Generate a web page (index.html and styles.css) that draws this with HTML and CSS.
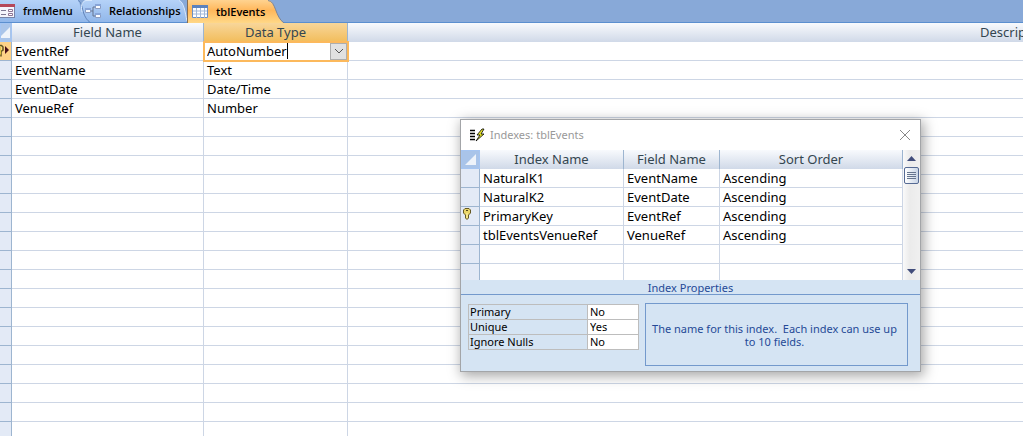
FILE: index.html
```
<!DOCTYPE html>
<html lang="en">
<head>
<meta charset="utf-8">
<title>tblEvents</title>
<link rel="stylesheet" href="styles.css">
<script src="rows.js" defer></script>
</head>
<body>
<nav class="tabs">
  <button class="tab tab-first">
    <svg class="tab-icon" width="16" height="14" viewBox="0 0 16 14"><rect x=".5" y=".5" width="15" height="13" fill="#f4f4fc" stroke="#7784a8"/><path d="M0 0h16v3H0z" fill="#b5485a"/><path d="M2 6.500h5M2 10.500h5" stroke="#7d7894"/><path d="M9.500 5.500h4v2h-4zM9.500 9.500h4v2h-4z" fill="#fff" stroke="#8e7494"/></svg>
    <span>frmMenu</span>
  </button>
  <button class="tab tab-second">
    <svg class="tab-edge" width="14" height="23" viewBox="0 0 14 23"><path d="M0 0h7C3 3 3 10 4 14C2 8 2 1 0 0z" fill="#88a9d8"/><path d="M0 .5C4 2 4 9 6 14C8 19 10 21 13 23" fill="none" stroke="#5f82b8"/><path d="M4 12C3 7 3 2 8 .5h6" fill="none" stroke="#d8e8fc"/></svg>
    <svg class="tab-icon" width="16" height="15" viewBox="0 0 16 15"><path d="M5 7h3V3h3M8 7v5h3" fill="none" stroke="#66758f"/><g stroke="#8c9cc0" fill="#f8fbff"><path d="M.5 4.500h5v4h-5zM10.500.5h5v4h-5zM10.500 9.500h5v4h-5z"/></g><path d="M0 4h6v2H0zM10 0h6v2h-6zM10 9h6v2h-6z" fill="#88a5d8"/></svg>
    <span>Relationships</span>
    <svg class="tab-corner" width="8" height="22" viewBox="0 0 8 22"><path d="M0 0h8v22C6 12 5 2 0 0z" fill="#88a9d8"/><path d="M0 .5C5 2 6 12 8 21" fill="none" stroke="#d8e8fc"/></svg>
  </button>
  <button class="tab tab-active">
    <svg class="tab-icon" width="16" height="13" viewBox="0 0 16 13"><path d="M.5.5h15v12H.5z" fill="#fff" stroke="#6b8fc4"/><path d="M0 0h16v3H0z" fill="#5c82bd"/><path d="M1 6h14M1 9h14" stroke="#a1b7d8"/><path d="M4.500 3v10M8.500 3v10M12.500 3v10" stroke="#a1b7d8"/></svg>
    <span>tblEvents</span>
    <svg class="tab-tail" width="17" height="23" viewBox="0 0 17 23"><defs><linearGradient id="tail" x2="0" y2="1"><stop offset="0" stop-color="#ffd390"/><stop offset=".45" stop-color="#ffb75b"/><stop offset="1" stop-color="#ffd887"/></linearGradient></defs><path d="M0 0C8 1 7 17 16 23H0z" fill="url(#tail)"/><path d="M0 .5C8 1 7 17 16 23" fill="none" stroke="#7d8495"/></svg>
  </button>
</nav>
<main class="sheet">
  <table class="grid fields">
    <colgroup><col class="sel"><col class="name"><col class="type"><col class="desc"></colgroup>
    <thead><tr><th class="corner"><svg width="9" height="13" viewBox="0 0 9 13"><path d="M9 1v11H-2z" fill="#eef3fa"/></svg></th><th>Field Name</th><th class="current-head">Data Type</th><th>Description</th></tr></thead>
    <tbody id="fields">
      <tr><td class="current-row"><svg class="row-mark" width="10" height="15" viewBox="0 0 10 15"><path d="M0 1.500h1.500L3 3v3L1 7.500v5" fill="none" stroke="#615420" stroke-width="1.500"/><path d="M0 2.500h1v8H0z" fill="#dfc440"/><path d="M5 2l4 4-4 4z" fill="#481018"/></svg></td><td>EventRef</td><td class="editing"><div class="combo"><input id="type" class="combo-text" aria-label="Data Type" value="AutoNumber"><span class="caret"></span><button class="combo-button" aria-label="Show data types"><svg width="10" height="6" viewBox="0 0 10 6"><path d="M1 1l4 4 4-4" fill="none" stroke="#555"/></svg></button></div></td><td></td></tr>
      <tr><td></td><td>EventName</td><td>Text</td><td></td></tr>
      <tr><td></td><td>EventDate</td><td>Date/Time</td><td></td></tr>
      <tr><td></td><td>VenueRef</td><td>Number</td><td></td></tr>
    </tbody>
  </table>
</main>
<section class="dialog" role="dialog" aria-labelledby="dialog-title">
  <header class="titlebar">
    <svg width="16" height="14" viewBox="0 0 16 14"><path d="M1 2.500h5M1 5.500h5M1 8.500h5M1 11.500h5" stroke="#000" stroke-width="1.500"/><path d="M13 1L8 7h3l-4 6 8-7h-3l3-5z" fill="#e9e72b" stroke="#000" stroke-width=".8"/></svg>
    <h1 id="dialog-title">Indexes: tblEvents</h1>
    <button class="close" aria-label="Close"><svg width="12" height="12" viewBox="0 0 12 12"><path d="M1 1l10 10M11 1L1 11" stroke="#888"/></svg></button>
  </header>
  <div class="index-list">
    <table class="grid indexes">
      <colgroup><col class="isel"><col class="iname"><col class="ifield"><col></colgroup>
      <thead><tr><th class="corner"><svg width="15" height="13" viewBox="0 0 15 13"><path d="M14 1v11H3z" fill="#eef3fa"/></svg></th><th>Index Name</th><th>Field Name</th><th>Sort Order</th></tr></thead>
      <tbody>
        <tr><td></td><td>NaturalK1</td><td>EventName</td><td>Ascending</td></tr>
        <tr><td></td><td>NaturalK2</td><td>EventDate</td><td>Ascending</td></tr>
        <tr><td><svg class="key" width="8" height="12" viewBox="0 0 8 12"><path d="M2 .5h4L7.500 2v3L5.500 7v3L4 11.500 2.500 10V7L.5 5V2z" fill="#e9d568" stroke="#655823"/><path d="M3 2.500h2" stroke="#554716"/><path d="M4 5v5" stroke="#fff5a8"/></svg></td><td>PrimaryKey</td><td>EventRef</td><td>Ascending</td></tr>
        <tr><td></td><td>tblEventsVenueRef</td><td>VenueRef</td><td>Ascending</td></tr>
        <tr><td></td><td></td><td></td><td></td></tr>
        <tr><td></td><td></td><td></td><td></td></tr>
      </tbody>
    </table>
    <div class="scrollbar">
      <button class="arrow" aria-label="Scroll up"><svg width="9" height="5" viewBox="0 0 9 5"><path d="M0 5l4.500-5L9 5z" fill="#414d7b"/></svg></button>
      <div class="thumb"><svg width="9" height="8" viewBox="0 0 9 8"><path d="M0 .5h9M0 2.500h9M0 4.500h9M0 6.500h9" stroke="#66758f"/></svg></div>
      <button class="arrow arrow-down" aria-label="Scroll down"><svg width="9" height="5" viewBox="0 0 9 5"><path d="M0 0l4.500 5L9 0z" fill="#414d7b"/></svg></button>
    </div>
  </div>
  <h2 class="props-title">Index Properties</h2>
  <div class="props">
    <table class="props-table">
      <tr><th><label for="primary">Primary</label></th><td><input id="primary" value="No"></td></tr>
      <tr><th><label for="unique">Unique</label></th><td><input id="unique" value="Yes"></td></tr>
      <tr><th><label for="nulls">Ignore Nulls</label></th><td><input id="nulls" value="No"></td></tr>
    </table>
    <p class="hint">The name for this index.&nbsp; Each index can use up to 10 fields.</p>
  </div>
</section>
</body>
</html>
```
FILE: styles.css
```
* { box-sizing: border-box; }
html, body { height: 100%; }
body { margin: 0; display: flex; flex-direction: column; overflow: hidden; background: #fff; color: #000; font: 13px/18px "Noto Sans", sans-serif; }
button, input { font: inherit; color: inherit; border: 0; padding: 0; margin: 0; background: none; }
button { display: flex; align-items: center; justify-content: center; }
svg { display: block; flex: none; }

.tabs { display: flex; flex: none; height: 23px; background: #88a9d8; border-bottom: 1px solid #5b8fcf; }
.tab { position: relative; height: 22px; justify-content: flex-start; gap: 8px; font: 600 11px/16px "Open Sans", sans-serif; background: linear-gradient(#b5d2f8, #91b7ea); }
.tab-first { width: 78px; }
.tab-first .tab-icon { margin-left: -1px; }
.tab-second { width: 109px; padding-left: 7px; }
.tab-edge { position: absolute; left: 0; top: 0; }
.tab-corner { position: absolute; right: 0; top: 0; }
.tab-second .tab-icon, .tab span { z-index: 1; }
.tab-active { width: 82px; height: 23px; padding-left: 4px; border-left: 1px solid #846d55; background: linear-gradient(#ffd390, #ffb75b 45%, #ffd887); }
.tab-tail { position: absolute; left: 100%; top: 0; margin-left: -1px; }

.sheet { flex: 1; min-height: 0; overflow: hidden; }
.grid { table-layout: fixed; border-collapse: separate; border-spacing: 0; }
.grid th, .grid td { height: 19px; padding: 0 3px; text-align: left; white-space: nowrap; overflow: hidden; border-right: 1px solid #cdd6e5; }
.grid td { border-bottom: 1px solid #cdd6e5; }
.grid th { text-align: center; font-weight: 400; line-height: 19px; color: #344650; background: linear-gradient(#f8fafd, #d0d9e8); border-right-color: #9db5d0; }
.grid td:first-child { padding: 0; background: #e3eaf6; border-color: #9db5d0; }
.grid th.corner { padding: 0; background: #a9c4e9; border: 1px solid #a5c5f2; line-height: 13px; }
.fields { width: 1683px; }
.sel { width: 12px; }
.name { width: 192px; }
.type { width: 144px; }
.grid th.current-head { background: linear-gradient(#f8d69a, #f2bd5b); }
.grid td.current-row { background: #fdd187; }
.grid td.editing { padding: 0; outline: 2px solid #fcb95c; outline-offset: -1px; }
.combo { display: flex; align-items: center; height: 18px; padding-left: 3px; }
.combo-text { field-sizing: content; height: 18px; outline: 0; }
.caret { width: 1px; height: 16px; background: #000; }
.combo-button { width: 17px; height: 17px; margin-left: auto; background: #e1e1e1; border: 1px solid #adadad; }

.dialog { position: absolute; left: 460px; top: 119px; width: 461px; background: #d5e4f3; border: 1px solid #a3a5a8; box-shadow: 2px 3px 12px 1px rgba(0, 0, 0, .35); }
.titlebar { display: flex; align-items: center; height: 30px; padding: 0 9px 0 8px; gap: 5px; background: #fff; }
.titlebar h1 { flex: 1; margin: 0; font: 400 11px/18px "Noto Sans", sans-serif; color: #999; }
.index-list { display: flex; height: 130px; background: #fff; overflow: hidden; }
.indexes { flex: 1; width: 0; }
.isel { width: 19px; }
.iname { width: 144px; }
.ifield { width: 96px; }
.grid .key { margin: 0 0 4px 2px; }
.scrollbar { display: flex; flex-direction: column; width: 17px; background: linear-gradient(90deg, #fafafa, #ebebeb 40%, #f0f0f0); }
.arrow { width: 17px; height: 17px; }
.thumb { display: flex; align-items: center; justify-content: center; width: 15px; height: 17px; margin-left: 1px; background: linear-gradient(90deg, #fff, #c9d5e6); border: 1px solid #556a94; border-radius: 2px; }
.arrow-down { margin-top: auto; }
.props-title { margin: 0; height: 15px; text-align: center; font: 400 11px/16px "Noto Sans", sans-serif; color: #254a97; border-bottom: 1px solid #7399cc; }
.props { display: flex; align-items: flex-start; gap: 6px; padding: 8px 12px 5px 7px; font-size: 11px; line-height: 14px; }
.props-table { flex: none; width: 171px; margin-top: 1px; table-layout: fixed; border-collapse: collapse; }
.props-table th, .props-table td { height: 15px; padding: 0 1px; text-align: left; font-weight: 400; border: 1px solid #bdbdbd; }
.props-table th { width: 119px; }
.props-table td { background: #fff; }
.props-table label { display: block; }
.props-table input { display: block; width: 100%; height: 14px; padding-left: 1px; }
.hint { display: flex; align-items: center; flex: 1; height: 63px; margin: 0; padding: 0 8px 0 4px; text-align: center; line-height: 13px; color: #254a97; border: 1px solid #7399cc; }
```
FILE: rows.js
```
const body = document.getElementById("fields");
for (let i = 0; i < 17; i++) {
  const row = body.insertRow();
  for (let c = 0; c < 4; c++) row.insertCell();
}
```
